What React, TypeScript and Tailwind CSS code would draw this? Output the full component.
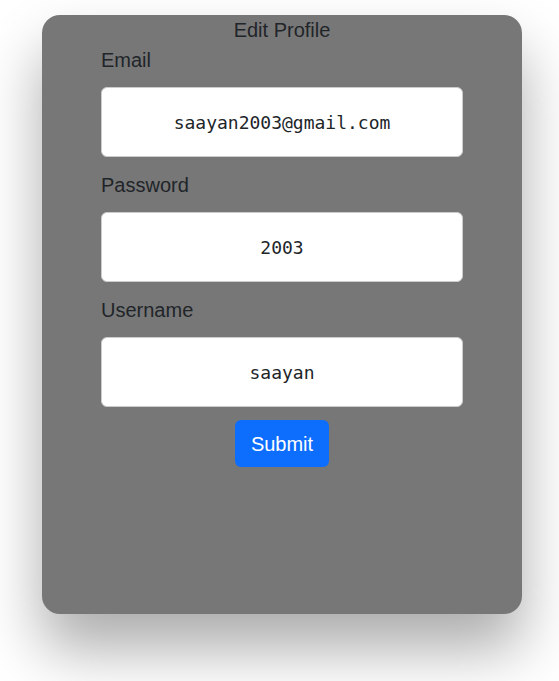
import React from 'react';

const fields = [
  { label: 'Email', value: 'saayan2003@gmail.com' },
  { label: 'Password', value: '2003' },
  { label: 'Username', value: 'saayan' },
];

const App: React.FC = () => {
  return (
    <div className="min-h-[681px] bg-white pt-[15px] pl-[42px] font-['Liberation_Sans',Arial,sans-serif]">
      <div className="w-[480px] h-[599px] bg-[#777777] rounded-[18px] shadow-[0_35px_60px_rgba(0,0,0,0.33)] flex flex-col items-center">
        <h2 className="text-[20px] leading-[30px] text-[#212529]">Edit Profile</h2>
        <form className="w-[362px] flex flex-col">
          {fields.map((f) => (
            <div key={f.label} className="flex flex-col">
              <label className="text-[20px] leading-[30px] text-[#212529]">{f.label}</label>
              <input
                type="text"
                defaultValue={f.value}
                className="mt-[12px] mb-[13px] h-[70px] w-full bg-white border border-[#cccccc] rounded-[6px] text-center text-[18px] text-[#212529] font-['DejaVu_Sans_Mono',monospace] outline-none"
              />
            </div>
          ))}
          <button
            type="button"
            className="self-center h-[47px] px-[16px] bg-[#0d6efd] text-white text-[20px] rounded-[6px]"
          >
            Submit
          </button>
        </form>
      </div>
    </div>
  );
};

export default App;
